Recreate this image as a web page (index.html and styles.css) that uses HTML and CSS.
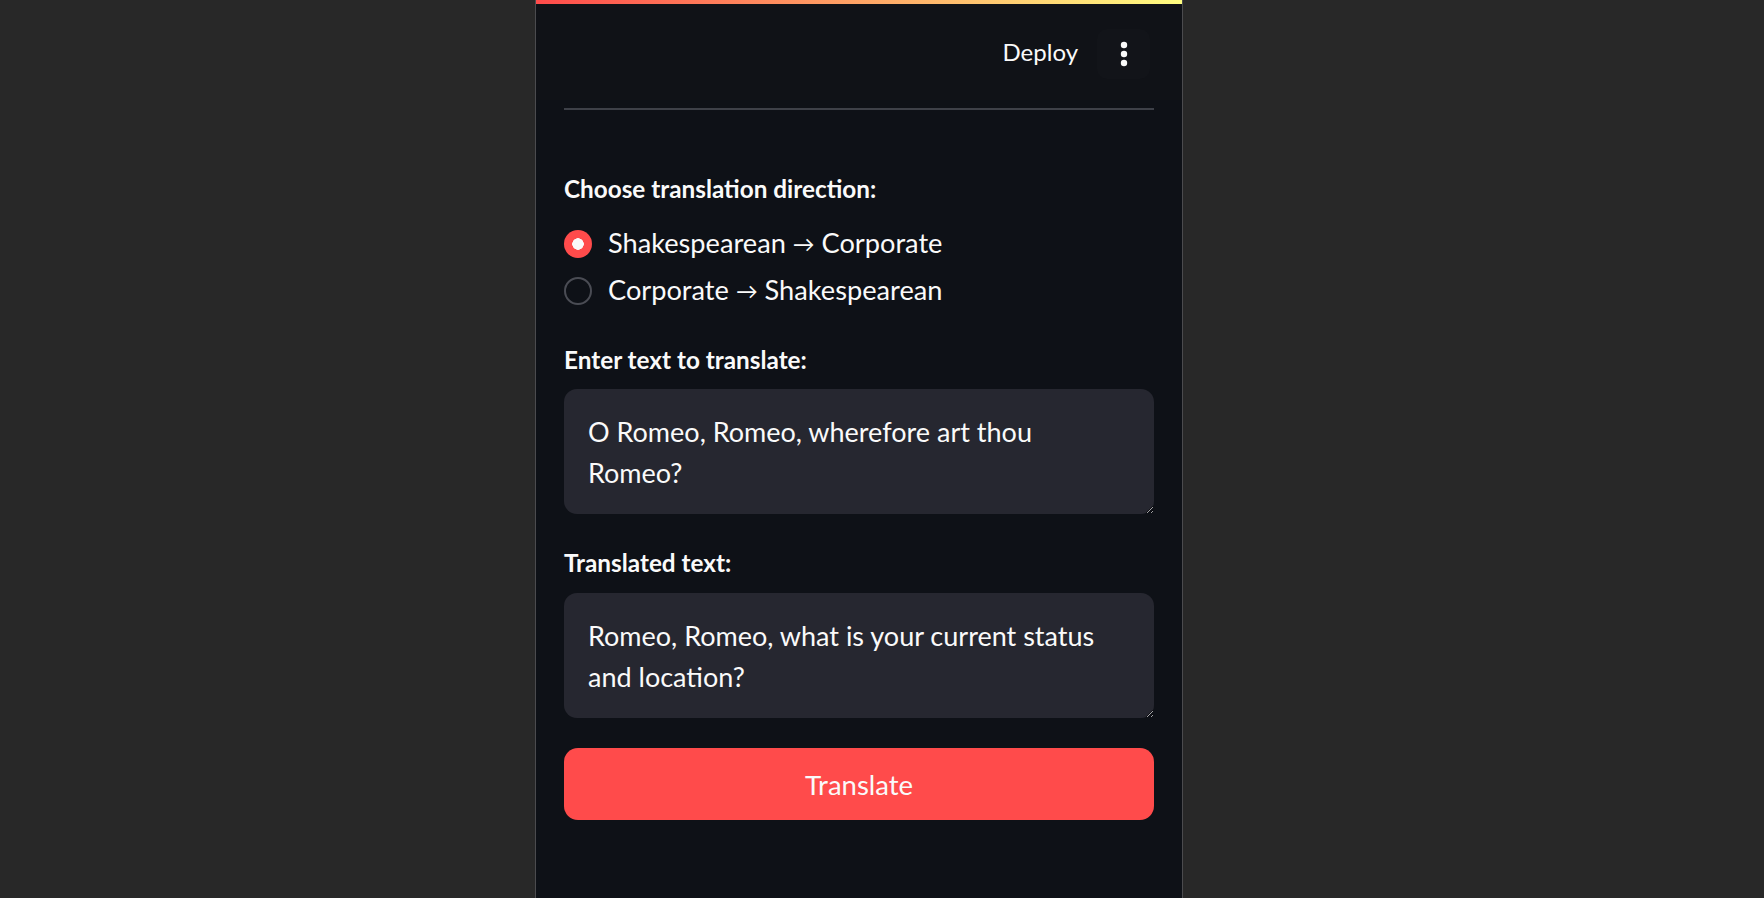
FILE: index.html
```html
<!DOCTYPE html>
<html lang="en">
<head>
<meta charset="utf-8">
<title>Shakespeare Corporate Translator</title>
<link rel="stylesheet" href="styles.css">
</head>
<body>
<div class="window">
  <div class="decoration"></div>
  <header class="header">
    <span class="deploy">Deploy</span>
    <button class="menu" aria-label="Main menu">
      <svg width="8" height="26" viewBox="0 0 8 26"><circle cx="4" cy="4" r="3.2" fill="#fafafa"/><circle cx="4" cy="13" r="3.2" fill="#fafafa"/><circle cx="4" cy="22" r="3.2" fill="#fafafa"/></svg>
    </button>
  </header>
  <main class="main">
    <hr class="divider">
    <div class="label label-first">Choose translation direction:</div>
    <div class="radios">
      <label class="radio"><span class="dot dot-on"></span><span>Shakespearean <span class="arrow">→</span> Corporate</span></label>
      <label class="radio"><span class="dot"></span><span>Corporate <span class="arrow">→</span> Shakespearean</span></label>
    </div>
    <div class="label label-input">Enter text to translate:</div>
    <textarea class="area area-in">O Romeo, Romeo, wherefore art thou Romeo?</textarea>
    <div class="label label-out">Translated text:</div>
    <textarea class="area area-out">Romeo, Romeo, what is your current status and location?</textarea>
    <button class="translate">Translate</button>
  </main>
</div>
</body>
</html>
```
FILE: styles.css
```css
* { box-sizing: border-box; }
html, body { margin: 0; padding: 0; height: 100%; }
body {
  background: #282828;
  font-family: Lato, "Open Sans", sans-serif;
  color: #fafafa;
  overflow: hidden;
}
.window {
  margin-left: 535px;
  width: 648px;
  height: 898px;
  background: #0e1117;
  border-left: 1px solid #4b4b4e;
  border-right: 1px solid #4b4b4e;
  display: flex;
  flex-direction: column;
}
.decoration {
  height: 4px;
  background: linear-gradient(90deg, #ff4b4b, #fffd80);
}
.header {
  height: 96px;
  background: #101217;
  display: flex;
  align-items: center;
  justify-content: flex-end;
  padding-right: 32px;
}
.deploy {
  font-size: 24px;
  line-height: 30px;
  margin-right: 19px;
}
.menu {
  width: 53px;
  height: 50px;
  border: none;
  border-radius: 10px;
  background: #121419;
  display: flex;
  align-items: center;
  justify-content: center;
  padding: 0;
  margin-top: 4px;
}
.main {
  padding: 0 28px;
  display: flex;
  flex-direction: column;
}
.divider {
  margin: 8px 0 0 0;
  border: none;
  height: 2px;
  background: #3d4048;
}
.label {
  font-size: 24.3px;
  font-weight: 700;
  line-height: 30px;
}
.label-first { margin-top: 64px; }
.radios {
  margin-top: 19px;
  display: flex;
  flex-direction: column;
  gap: 6px;
}
.radio {
  display: flex;
  align-items: center;
  gap: 16px;
  font-size: 27.2px;
  line-height: 40px;
}
.arrow {
  font-size: 0.8em;
  vertical-align: 1px;
}
.dot {
  width: 28px;
  height: 28px;
  border-radius: 50%;
  border: 2px solid #4a4c54;
  flex: none;
}
.dot-on {
  border: none;
  background: #ff4b4b radial-gradient(circle, #fafafa 0 5.5px, transparent 6px);
}
.label-input { margin-top: 34px; }
.area {
  display: block;
  width: 100%;
  margin-top: 14px;
  background: #262730;
  border: none;
  border-radius: 13px;
  color: #fafafa;
  font-family: inherit;
  font-size: 27px;
  line-height: 40.5px;
  padding: 23px 40px 23px 24px;
  resize: vertical;
  outline: none;
}
.area-in { height: 125px; }
.label-out { margin-top: 34px; }
.area-out { height: 125px; margin-top: 15px; }
.translate {
  margin-top: 30px;
  height: 72px;
  width: 100%;
  background: #ff4b4b;
  border: none;
  border-radius: 14px;
  color: #fafafa;
  font-family: inherit;
  font-size: 27.5px;
}
```
